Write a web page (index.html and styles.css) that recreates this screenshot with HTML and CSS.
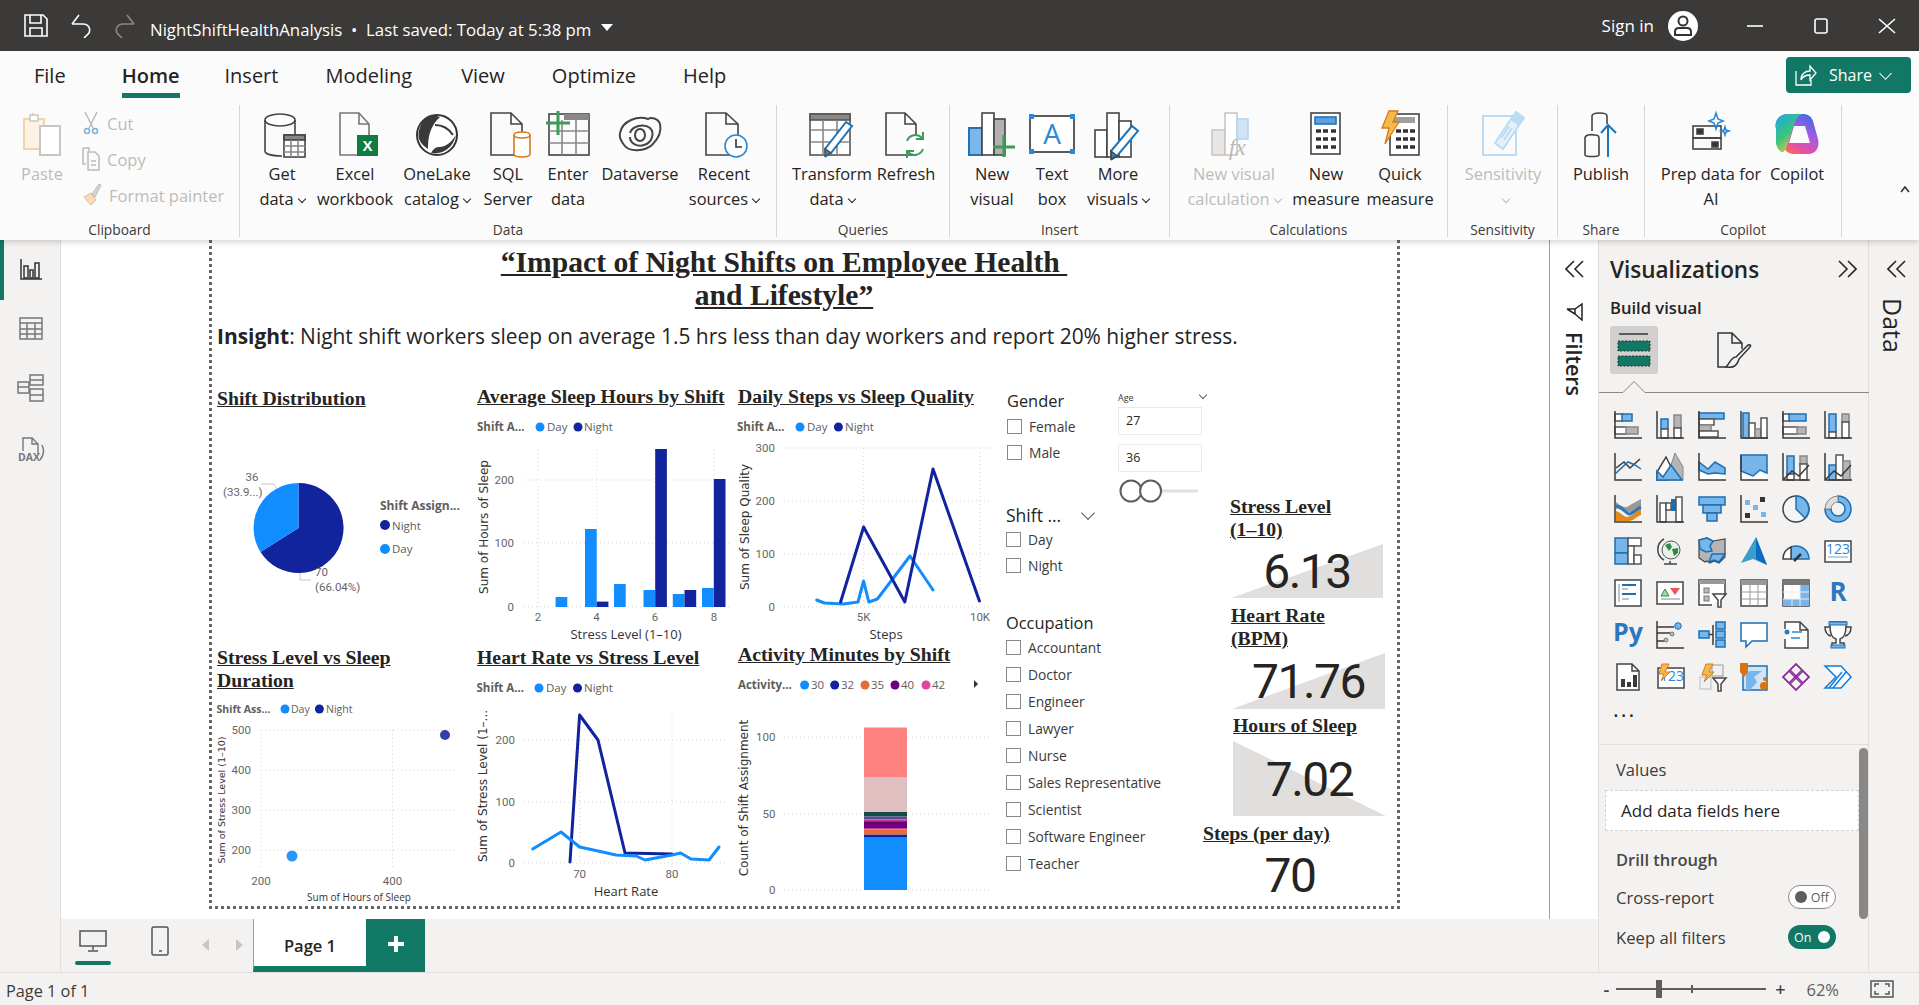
FILE: index.html
```html
<!DOCTYPE html>
<html lang="en">
<head>
<meta charset="utf-8">
<title>NightShiftHealthAnalysis - Power BI Desktop</title>
<link rel="stylesheet" href="styles.css">
</head>
<body>
<header class="titlebar">
  <div class="qat">
    <svg width="24" height="23" viewBox="0 0 24 23" class="wi"><path d="M1 1h18l4 4v17H1zM6 1v8h11V1M6 22v-8h12v8"/></svg>
    <svg width="22" height="24" viewBox="0 0 22 24" class="wi"><path d="M2 10h11c5 0 8 4 6 9l-5 5M2 10l7-9M2 10l5 0"/></svg>
    <svg width="22" height="24" viewBox="0 0 22 24" class="di"><path d="M20 10H9c-5 0-8 4-6 9l5 5M20 10l-7-9M20 10h-5"/></svg>
  </div>
  <div class="doc">NightShiftHealthAnalysis &nbsp;•&nbsp; Last saved: Today at 5:38 pm</div>
  <span class="doc-caret"></span>
  <div class="spacer"></div>
  <div class="signin">Sign in</div>
  <svg class="avatar" width="30" height="30" viewBox="0 0 30 30"><circle cx="15" cy="15" r="15" fill="#fff"/><circle cx="15" cy="10" r="4.5" fill="none" stroke="#333" stroke-width="2"/><path d="M7 24v-3c0-3 2-4 4-4h8c2 0 4 1 4 4v3z" fill="none" stroke="#333" stroke-width="2"/></svg>
  <div class="winbtns">
    <svg width="18" height="16" viewBox="0 0 18 16" class="wi"><path d="M1 8h16"/></svg>
    <svg width="14" height="16" viewBox="0 0 14 16" class="wi"><rect x="1" y="1" width="12" height="14" rx="2"/></svg>
    <svg width="18" height="16" viewBox="0 0 18 16" class="wi"><path d="M1 1l16 14M17 1L1 15"/></svg>
  </div>
</header>

<section class="ribbon">
  <nav class="tabs">
    <span class="tab t-file">File</span>
    <span class="tab active">Home</span>
    <span class="tab">Insert</span>
    <span class="tab t-model">Modeling</span>
    <span class="tab">View</span>
    <span class="tab">Optimize</span>
    <span class="tab">Help</span>
    <div class="share">
      <svg width="22" height="24" viewBox="0 0 22 24" class="wi thin"><path d="M1 8v14h15v-5M6 17c0-6 4-9 9-9V3l6 7-6 7v-5c-4 0-7 1-9 5z"/></svg>
      <span>Share</span><i class="chev-w"></i>
    </div>
  </nav>
  <div class="groups">
    <div class="group g-clip">
      <div class="items">
        <div class="item dis w-paste">
          <svg class="ic" width="48" height="48" viewBox="0 0 48 48"><path d="M6 8h6l3-5 3 5h8v30H6z" fill="#fdf3e5" stroke="#f2d3aa" stroke-width="2"/><rect x="22" y="15" width="20" height="29" fill="#fff" stroke="#c8c6c4" stroke-width="2"/><path d="M12 4h8v6h-8z" fill="#fff" stroke="#c8c6c4" stroke-width="1.5"/></svg>
          <div class="lbl">Paste</div>
        </div>
        <div class="minis dis">
          <div class="mini"><svg width="18" height="24" viewBox="0 0 18 24" fill="none" stroke="#bdbbb9" stroke-width="1.5"><path d="M3 1l8 16M15 1L7 17"/><circle cx="5" cy="20" r="2.5" stroke="#7fb1d8"/><circle cx="13" cy="20" r="2.5" stroke="#7fb1d8"/></svg><span>Cut</span></div>
          <div class="mini"><svg width="18" height="24" viewBox="0 0 18 24" fill="none" stroke="#bdbbb9" stroke-width="1.5"><path d="M1 1h6v3M1 1v16h3M6 5h7l4 4v14H6zM9 14h5M9 18h5"/></svg><span>Copy</span></div>
          <div class="mini"><svg width="20" height="24" viewBox="0 0 20 24"><path d="M2 14l7-4 5 7-5 5z" fill="#f8ddb6" stroke="#e2b98a"/><path d="M10 11l7-10 2 1-6 12z" fill="#d8d6d4" stroke="#bdbbb9"/></svg><span>Format painter</span></div>
        </div>
      </div>
      <div class="glabel">Clipboard</div>
    </div>

    <div class="group g-data">
      <div class="items">
        <div class="item w60"><svg class="ic" width="48" height="48" viewBox="0 0 48 48" fill="none" stroke="#444" stroke-width="1.6"><ellipse cx="22" cy="9" rx="15" ry="6" fill="#fff"/><path d="M7 9v31c0 3 7 5 17 5M37 9v14"/><rect x="26" y="24" width="21" height="22" fill="#fff"/><rect x="26" y="24" width="21" height="5" fill="#8a8886"/><path d="M33 29v17M40 29v17M26 35h21M26 41h21" stroke="#8a8886"/></svg><div class="lbl">Get<br>data<i class="chev"></i></div></div>
        <div class="item w86"><svg class="ic" width="48" height="48" viewBox="0 0 48 48" fill="none" stroke="#777" stroke-width="1.6"><path d="M9 2h19l10 11v31H9zM28 2v11h10"/><rect x="26" y="24" width="21" height="21" fill="#107c41" stroke="none"/><text x="36.5" y="40" class="xl">X</text></svg><div class="lbl">Excel<br>workbook</div></div>
        <div class="item w78"><svg class="ic" width="48" height="48" viewBox="0 0 48 48"><ellipse cx="24" cy="24" rx="20" ry="20" fill="#fff" stroke="#333" stroke-width="2"/><path d="M20 4C10 6 4 18 6 28c2 5 6 8 9 10 0-10 1-22 12-32z" fill="#3b3a39"/><path d="M18 42c10 2 22-4 25-18-4 6-9 12-17 12-4 0-6 3-8 6z" fill="#3b3a39"/><path d="M22 14c8 0 14 4 18 10" fill="none" stroke="#3b3a39" stroke-width="2"/></svg><div class="lbl">OneLake<br>catalog<i class="chev"></i></div></div>
        <div class="item w64"><svg class="ic" width="48" height="48" viewBox="0 0 48 48" fill="none" stroke="#444" stroke-width="1.6"><path d="M7 2h20l11 11v31H7zM27 2v11h11"/><path d="M30 24c0-4 16-4 16 0v19c0 4-16 4-16 0z" fill="#fff" stroke="#d87a1c"/><path d="M30 24c0 4 16 4 16 0" stroke="#d87a1c"/></svg><div class="lbl">SQL<br>Server</div></div>
        <div class="item w56"><svg class="ic" width="48" height="48" viewBox="0 0 48 48" fill="none" stroke="#444" stroke-width="1.6"><rect x="5" y="3" width="40" height="41"/><rect x="20" y="3" width="25" height="6" fill="#8a8886" stroke="none"/><path d="M5 20h40M5 32h40M18 9v35M32 9v35" stroke="#8a8886"/><path d="M14 0v24M2 12h24" stroke="#3d9a5c" stroke-width="3"/></svg><div class="lbl">Enter<br>data</div></div>
        <div class="item w88"><svg class="ic" width="48" height="48" viewBox="0 0 48 48" fill="none" stroke="#444" stroke-width="2"><path d="M4 22C6 10 22 4 32 8c3-2 10-1 12 5 2 8-2 15-8 21-7 6-22 8-28 0-3-4-5-8-4-12z"/><path d="M14 22c2-7 14-10 20-5 5 5 2 15-6 17-6 2-14-1-14-8"/><ellipse cx="24" cy="24" rx="5" ry="6"/></svg><div class="lbl">Dataverse</div></div>
        <div class="item w80"><svg class="ic" width="48" height="48" viewBox="0 0 48 48" fill="none" stroke="#444" stroke-width="1.6"><path d="M6 2h20l12 11v31H6zM26 2v11h12"/><circle cx="36" cy="35" r="11" fill="#fff" stroke="#2b88d8"/><path d="M36 28v8h6" stroke="#333"/></svg><div class="lbl">Recent<br>sources<i class="chev"></i></div></div>
      </div>
      <div class="glabel">Data</div>
    </div>

    <div class="group g-query">
      <div class="items">
        <div class="item w80"><svg class="ic" width="48" height="48" viewBox="0 0 48 48" fill="none" stroke="#555" stroke-width="1.6"><rect x="2" y="3" width="40" height="41" fill="#fff"/><rect x="2" y="3" width="40" height="6" fill="#8a8886"/><path d="M2 19h40M2 31h40M15 9v35M29 9v35" stroke="#8a8886"/><path d="M18 45l-1-7 21-27 6 4-21 27z" fill="#fff" stroke="#1f74b7" stroke-width="2"/><path d="M17 38l6 4-6 3z" fill="#2b88d8"/></svg><div class="lbl">Transform<br>data<i class="chev"></i></div></div>
        <div class="item w68"><svg class="ic" width="48" height="48" viewBox="0 0 48 48" fill="none" stroke="#444" stroke-width="1.6"><path d="M4 2h19l11 11v31H4zM23 2v11h11"/><circle cx="33" cy="34" r="10" fill="#fff" stroke="none"/><path d="M25 30a9 9 0 0 1 15-3M41 38a9 9 0 0 1-15 3" stroke="#3d9a5c" stroke-width="2"/><path d="M41 21v7h-7M25 47v-7h7" stroke="#3d9a5c" stroke-width="2"/></svg><div class="lbl">Refresh</div></div>
      </div>
      <div class="glabel">Queries</div>
    </div>

    <div class="group g-insert">
      <div class="items">
        <div class="item w60"><svg class="ic" width="48" height="48" viewBox="0 0 48 48" fill="none" stroke="#444" stroke-width="1.6"><rect x="1" y="17" width="13" height="27" fill="#7db7ea" stroke="#1f74b7" stroke-width="2"/><rect x="14" y="2" width="12" height="42" fill="#fff"/><rect x="26" y="8" width="11" height="36" fill="#b3b0ad"/><path d="M36 24v22M25 36h22" stroke="#3d9a5c" stroke-width="3"/></svg><div class="lbl">New<br>visual</div></div>
        <div class="item w60"><svg class="ic" width="48" height="48" viewBox="0 0 48 48" fill="none"><rect x="2" y="5" width="44" height="36" fill="#fff" stroke="#333" stroke-width="1.6"/><path d="M1 3h5v5H1zM42 3h5v5h-5zM1 38h5v5H1zM42 38h5v5h-5z" fill="#2b88d8"/><text x="24" y="33" class="tb">A</text></svg><div class="lbl">Text<br>box</div></div>
        <div class="item w72"><svg class="ic" width="48" height="48" viewBox="0 0 48 48" fill="none" stroke="#444" stroke-width="1.6"><rect x="1" y="19" width="12" height="27" fill="#fff"/><rect x="13" y="2" width="12" height="44" fill="#fff"/><rect x="25" y="10" width="12" height="36" fill="#fff"/><path d="M18 48l-1-8 21-25 6 5-21 25z" fill="#fff" stroke="#1f74b7" stroke-width="2"/><path d="M17 40l6 5-6 3z" fill="#2b88d8"/></svg><div class="lbl">More<br>visuals<i class="chev"></i></div></div>
      </div>
      <div class="glabel">Insert</div>
    </div>

    <div class="group g-calc">
      <div class="items">
        <div class="item dis w100"><svg class="ic" width="48" height="48" viewBox="0 0 48 48" fill="none" stroke="#c8c6c4" stroke-width="1.6"><rect x="2" y="19" width="13" height="25" fill="#e8e6e4"/><rect x="15" y="2" width="12" height="42" fill="#fff"/><rect x="27" y="8" width="11" height="20" fill="#cfe3f5" stroke="#b8d5ee"/><text x="36" y="44" class="fx">fx</text></svg><div class="lbl">New visual<br>calculation<i class="chev"></i></div></div>
        <div class="item w84"><svg class="ic" width="48" height="48" viewBox="0 0 48 48" fill="none" stroke="#444" stroke-width="1.6"><rect x="9" y="2" width="29" height="41" fill="#fff"/><rect x="13" y="6" width="21" height="7" fill="#5aa3e0" stroke="#1f74b7"/><path d="M14 20h5M21 20h5M29 20h5M14 28h5M21 28h5M29 28h5M14 36h5M21 36h5M29 36h5" stroke="#333" stroke-width="3.5"/></svg><div class="lbl">New<br>measure</div></div>
        <div class="item w64"><svg class="ic" width="48" height="48" viewBox="0 0 48 48" fill="none" stroke="#444" stroke-width="1.6"><rect x="14" y="3" width="29" height="41" fill="#fff"/><rect x="18" y="6" width="21" height="6" fill="#a19f9d" stroke="none"/><path d="M20 20h5M27 20h5M34 20h5M20 28h5M27 28h5M34 28h5M20 36h5M27 36h5M34 36h5" stroke="#333" stroke-width="3.5"/><path d="M13 0h9l-5 11h6L9 33l4-16H6z" fill="#f7b84b" stroke="#d87a1c" stroke-width="1.3"/></svg><div class="lbl">Quick<br>measure</div></div>
      </div>
      <div class="glabel">Calculations</div>
    </div>

    <div class="group g-sens">
      <div class="items">
        <div class="item dis w110"><svg class="ic" width="48" height="48" viewBox="0 0 48 48" fill="none" stroke="#bcdcf4" stroke-width="2"><rect x="4" y="5" width="33" height="39"/><path d="M16 32L32 8l8 6-16 24z" fill="#e5f1fb"/><path d="M32 8l5-7 8 6-5 7" fill="#bcdcf4"/><path d="M22 27l8-12M25 29l8-12"/></svg><div class="lbl">Sensitivity<br><i class="chev"></i></div></div>
      </div>
      <div class="glabel">Sensitivity</div>
    </div>

    <div class="group g-share">
      <div class="items">
        <div class="item w86"><svg class="ic" width="48" height="48" viewBox="0 0 48 48" fill="none" stroke="#444" stroke-width="1.6"><path d="M15 20V5c0-4 15-4 15 0v8"/><path d="M8 44V27c0-3 5-4 10-3 3 0 4 1 4 3v17c0 2-14 2-14 0z"/><path d="M31 46V15M24 22l7-8 8 8" stroke="#1f74b7" stroke-width="2"/></svg><div class="lbl">Publish</div></div>
      </div>
      <div class="glabel">Share</div>
    </div>

    <div class="group g-cop">
      <div class="items">
        <div class="item w100"><svg class="ic" width="48" height="48" viewBox="0 0 48 48" fill="none" stroke="#444" stroke-width="1.6"><rect x="6" y="15" width="28" height="12"/><rect x="6" y="27" width="28" height="11"/><rect x="10" y="18" width="6" height="5" fill="#333"/><rect x="25" y="31" width="6" height="5" fill="#333"/><path d="M29 2l2 6 5 2-5 2-2 6-2-6-5-2 5-2z" stroke="#2b88d8"/><path d="M38 16l1 3 3 1-3 1-1 3-1-3-3-1 3-1z" stroke="#2b88d8"/></svg><div class="lbl">Prep data for<br>AI</div></div>
        <div class="item w72"><svg class="ic" width="48" height="48" viewBox="0 0 48 48"><defs><linearGradient id="cpa" x1="0" y1="0" x2=".6" y2="1"><stop offset="0" stop-color="#1fa8e8"/><stop offset=".55" stop-color="#37c47e"/><stop offset="1" stop-color="#f4c343"/></linearGradient><linearGradient id="cpb" x1=".8" y1="0" x2=".2" y2="1"><stop offset="0" stop-color="#3d6be8"/><stop offset=".4" stop-color="#a35be2"/><stop offset=".75" stop-color="#e84fa0"/><stop offset="1" stop-color="#f5803a"/></linearGradient></defs><path d="M15 3h15c5 0 8 2 10 7l5 18c2 8-2 15-9 15H21c-5 0-8-2-10-7L3 18C1 10 6 3 15 3z" fill="url(#cpb)"/><path d="M15 3h15c-5 1-7 5-9 10l-7 22c-1 4-4 8-7 5-2-2-3-4-4-7L3 18C1 10 6 3 15 3z" fill="url(#cpa)"/><path d="M21 15h11l5 17H16z" fill="#fbfbfb"/></svg><div class="lbl">Copilot</div></div>
      </div>
      <div class="glabel">Copilot</div>
    </div>
    <svg class="collapse" width="10" height="7" viewBox="0 0 10 7"><path d="M1 6l4-5 4 5" fill="none" stroke="#333" stroke-width="1.6"/></svg>
  </div>
</section>

<main class="workspace">
  <aside class="leftnav">
    <div class="navitem active">
      <svg width="22" height="22" viewBox="0 0 22 22" fill="none" stroke="#333" stroke-width="1.5"><path d="M1 0v20h21"/><path d="M4 7h4v12H4zM10 11h3v8h-3zM15 4h4v15h-4z"/></svg>
    </div>
    <div class="navitem">
      <svg width="24" height="23" viewBox="0 0 24 23" fill="none" stroke="#777" stroke-width="1.5"><rect x="1" y="1" width="22" height="21"/><path d="M1 6h22M1 12h22M1 17h22M8 6v16M16 6v16"/></svg>
    </div>
    <div class="navitem">
      <svg width="28" height="28" viewBox="0 0 28 28" fill="none" stroke="#777" stroke-width="1.5"><rect x="1" y="8" width="11" height="11"/><path d="M1 13h11"/><rect x="13" y="1" width="13" height="10"/><path d="M13 6h13"/><rect x="13" y="15" width="13" height="12"/><path d="M13 21h13"/></svg>
    </div>
    <div class="navitem">
      <svg width="28" height="27" viewBox="0 0 28 27" fill="none" stroke="#777" stroke-width="1.4"><path d="M6 14V1h9l6 6v10M15 1v6h6M25 8c2 4 2 10-2 15"/><text x="1" y="24" class="daxt">DAX</text></svg>
    </div>
  </aside>

  <div class="center">
    <div class="canvas-row">
      <div class="canvas">
        <div class="report">
          <div class="rtitle">“Impact of Night Shifts on Employee Health&nbsp;<br>and Lifestyle”</div>
          <p class="insight"><b>Insight</b>: Night shift workers sleep on average 1.5 hrs less than day workers and report 20% higher stress.</p>

          <div class="vis v-pie">
            <h3 class="vt">Shift Distribution</h3>
            <svg class="chart" width="260" height="190" viewBox="215 410 260 190">
              <path d="M298.5 528V483A45 45 0 1 1 260.5 552Z" fill="#12239e"/>
              <path d="M298.5 528L260.5 552A45 45 0 0 1 298.5 483Z" fill="#118dff"/>
              <path class="leader" d="M261 484h13l3 5M300 573v7h11"/>
              <text class="tk" x="252" y="481" text-anchor="middle">36</text>
              <text class="tk" x="223" y="496">(33.9...)</text>
              <text class="tk" x="315" y="576">70</text>
              <text class="tk" x="315" y="591">(66.04%)</text>
              <text class="lg big" x="380" y="510">Shift Assign...</text>
              <circle cx="385" cy="525" r="5" fill="#12239e"/><text class="ll" x="392" y="530">Night</text>
              <circle cx="385" cy="549" r="5" fill="#118dff"/><text class="ll" x="392" y="553">Day</text>
            </svg>
          </div>

          <div class="vis v-bars">
            <h3 class="vt">Average Sleep Hours by Shift</h3>
            <svg class="chart" width="270" height="240" viewBox="470 408 270 240">
              <text class="lg" x="477" y="431">Shift A...</text>
              <circle cx="540" cy="427" r="4.5" fill="#118dff"/><text class="ll" x="547" y="431">Day</text>
              <circle cx="578" cy="427" r="4.5" fill="#12239e"/><text class="ll" x="584" y="431">Night</text>
              <path class="grid" d="M524 480H729M524 543H729M524 607H729M538 450V607M596.6 450V607M655 450V607M714 450V607"/>
              <text class="tk" x="514" y="484" text-anchor="end">200</text>
              <text class="tk" x="514" y="547" text-anchor="end">100</text>
              <text class="tk" x="514" y="611" text-anchor="end">0</text>
              <text class="ay" transform="translate(488 527) rotate(-90)" text-anchor="middle">Sum of Hours of Sleep</text>
              <g fill="#118dff"><rect x="555.6" y="597" width="11.7" height="10"/><rect x="585" y="529" width="11.7" height="78"/><rect x="614" y="584" width="11.7" height="23"/><rect x="643.5" y="590" width="11.7" height="17"/><rect x="672.8" y="594" width="11.7" height="13"/><rect x="702" y="588" width="11.7" height="19"/></g>
              <g fill="#12239e"><rect x="596.7" y="601.6" width="11.7" height="5.4"/><rect x="655.2" y="449" width="11.7" height="158"/><rect x="684.5" y="590" width="11.7" height="17"/><rect x="713.8" y="479" width="11.7" height="128"/></g>
              <g class="tk" text-anchor="middle"><text x="538" y="621">2</text><text x="596.6" y="621">4</text><text x="655" y="621">6</text><text x="714" y="621">8</text></g>
              <text class="at" x="626" y="639" text-anchor="middle">Stress Level (1–10)</text>
            </svg>
          </div>

          <div class="vis v-lines">
            <h3 class="vt">Daily Steps vs Sleep Quality</h3>
            <svg class="chart" width="268" height="240" viewBox="732 408 268 240">
              <text class="lg" x="737" y="431">Shift A...</text>
              <circle cx="800" cy="427" r="4.5" fill="#118dff"/><text class="ll" x="807" y="431">Day</text>
              <circle cx="838.4" cy="427" r="4.5" fill="#12239e"/><text class="ll" x="845" y="431">Night</text>
              <path class="grid" d="M784 448H989M784 501H989M784 554H989M784 607H989M863.6 448V607M980 448V607"/>
              <g class="tk" text-anchor="end"><text x="775" y="452">300</text><text x="775" y="505">200</text><text x="775" y="558">100</text><text x="775" y="611">0</text></g>
              <text class="ay" transform="translate(749 527) rotate(-90)" text-anchor="middle">Sum of Sleep Quality</text>
              <polyline class="ln day" points="816.7,600 824.5,603 843.6,604 858,602 863.6,581 868.8,602 877.4,599 910,556 933,590"/>
              <polyline class="ln night" points="840.6,602 863.6,527 904.8,602 933,469 979.4,601"/>
              <text class="tk" x="863.6" y="621" text-anchor="middle">5K</text>
              <text class="tk" x="980" y="621" text-anchor="middle">10K</text>
              <text class="at" x="886" y="639" text-anchor="middle">Steps</text>
            </svg>
          </div>

          <div class="slicer s-gender">
            <div class="shead">Gender</div>
            <label class="srow"><i class="box"></i>Female</label>
            <label class="srow"><i class="box"></i>Male</label>
          </div>

          <div class="age">
            <div class="agehead"><span>Age</span><i class="chev-g"></i></div>
            <div class="agebox">27</div>
            <div class="agebox gap">36</div>
            <svg class="ageslide" width="90" height="24" viewBox="0 0 90 24"><path d="M30 12h50" stroke="#e1dfdd" stroke-width="3"/><circle cx="13" cy="12" r="10.5" fill="#fff" stroke="#605e5c" stroke-width="2"/><circle cx="32.6" cy="12" r="10.5" fill="#fff" stroke="#605e5c" stroke-width="2"/></svg>
          </div>

          <div class="slicer s-shift">
            <div class="shead big">Shift ...<i class="chev-g lg-chev"></i></div>
            <label class="srow"><i class="box"></i>Day</label>
            <label class="srow"><i class="box"></i>Night</label>
          </div>

          <div class="slicer s-occ">
            <div class="shead">Occupation</div>
            <label class="srow tight"><i class="box"></i>Accountant</label>
            <label class="srow tight"><i class="box"></i>Doctor</label>
            <label class="srow tight"><i class="box"></i>Engineer</label>
            <label class="srow tight"><i class="box"></i>Lawyer</label>
            <label class="srow tight"><i class="box"></i>Nurse</label>
            <label class="srow tight"><i class="box"></i>Sales Representative</label>
            <label class="srow tight"><i class="box"></i>Scientist</label>
            <label class="srow tight"><i class="box"></i>Software Engineer</label>
            <label class="srow tight"><i class="box"></i>Teacher</label>
          </div>

          <div class="kpi k1">
            <h3 class="vt">Stress Level<br>(1–10)</h3>
            <div class="kcard tri-up"><span>6.13</span></div>
          </div>
          <div class="kpi k2">
            <h3 class="vt">Heart Rate<br>(BPM)</h3>
            <div class="kcard tri-up"><span>71.76</span></div>
          </div>
          <div class="kpi k3">
            <h3 class="vt">Hours of Sleep</h3>
            <div class="kcard tri-down"><span>7.02</span></div>
          </div>
          <div class="kpi k4">
            <h3 class="vt">Steps (per day)</h3>
            <div class="kcard plain"><span>70</span></div>
          </div>

          <div class="vis v-scatter">
            <h3 class="vt">Stress Level vs Sleep<br>Duration</h3>
            <svg class="chart" width="255" height="213" viewBox="212 693 255 213">
              <text class="lg s" x="216.5" y="713">Shift Ass...</text>
              <circle cx="285" cy="709" r="4.5" fill="#118dff"/><text class="ll s" x="291" y="713">Day</text>
              <circle cx="319.4" cy="709" r="4.5" fill="#12239e"/><text class="ll s" x="326" y="713">Night</text>
              <path class="grid" d="M261 730H455M261 770H455M261 810H455M261 850H455M261 730V870M392.5 730V870"/>
              <g class="tk" text-anchor="end"><text x="251" y="734">500</text><text x="251" y="774">400</text><text x="251" y="814">300</text><text x="251" y="854">200</text></g>
              <text class="ay small" transform="translate(225 800) rotate(-90)" text-anchor="middle">Sum of Stress Level (1–10)</text>
              <circle cx="292" cy="856" r="5.5" fill="#2b96ff"/>
              <circle cx="445" cy="735" r="5" fill="#3040aa"/>
              <text class="tk" x="261" y="885" text-anchor="middle">200</text>
              <text class="tk" x="392.5" y="885" text-anchor="middle">400</text>
              <text class="at s" x="359" y="901" text-anchor="middle">Sum of Hours of Sleep</text>
            </svg>
          </div>

          <div class="vis v-heart">
            <h3 class="vt">Heart Rate vs Stress Level</h3>
            <svg class="chart" width="265" height="235" viewBox="470 670 265 235">
              <text class="lg" x="476.5" y="692">Shift A...</text>
              <circle cx="539" cy="688" r="4.5" fill="#118dff"/><text class="ll" x="546" y="692">Day</text>
              <circle cx="577.5" cy="688" r="4.5" fill="#12239e"/><text class="ll" x="584" y="692">Night</text>
              <path class="grid" d="M524 740H728M524 802H728M524 863H728M579.6 712V863M672 712V863"/>
              <g class="tk" text-anchor="end"><text x="515" y="744">200</text><text x="515" y="806">100</text><text x="515" y="867">0</text></g>
              <text class="ay" transform="translate(487 786) rotate(-90)" text-anchor="middle">Sum of Stress Level (1–...</text>
              <polyline class="ln night" points="570,862 579.6,715 598,740 625,853 672,854"/>
              <polyline class="ln day" points="532.7,849 561,832 579.6,847 598,851 616,855 636,856 645,860 672,855 680.6,853 691,859 709,860 719,847"/>
              <text class="tk" x="579.6" y="878" text-anchor="middle">70</text>
              <text class="tk" x="672" y="878" text-anchor="middle">80</text>
              <text class="at" x="626" y="896" text-anchor="middle">Heart Rate</text>
            </svg>
          </div>

          <div class="vis v-stack">
            <h3 class="vt">Activity Minutes by Shift</h3>
            <svg class="chart" width="265" height="235" viewBox="732 667 265 235">
              <text class="lg" x="738" y="689">Activity...</text>
              <circle cx="804.6" cy="685" r="4.5" fill="#118dff"/><text class="ll" x="811" y="689">30</text>
              <circle cx="834.7" cy="685" r="4.5" fill="#12239e"/><text class="ll" x="841" y="689">32</text>
              <circle cx="865" cy="685" r="4.5" fill="#e66c37"/><text class="ll" x="871" y="689">35</text>
              <circle cx="895" cy="685" r="4.5" fill="#6b007b"/><text class="ll" x="901" y="689">40</text>
              <circle cx="926" cy="685" r="4.5" fill="#e044a7"/><text class="ll" x="932" y="689">42</text>
              <path d="M974 680l4 4-4 4z" fill="#333"/>
              <path class="grid" d="M784 737H990M784 814H990M784 890H990"/>
              <g class="tk" text-anchor="end"><text x="775.5" y="741">100</text><text x="775.5" y="818">50</text><text x="775.5" y="894">0</text></g>
              <text class="ay" transform="translate(748 798) rotate(-90)" text-anchor="middle">Count of Shift Assignment</text>
              <rect x="864" y="727" width="43" height="1" fill="#f0c8c4"/>
              <rect x="864" y="728" width="43" height="49.7" fill="#fd817e"/>
              <rect x="864" y="777.7" width="43" height="34.3" fill="#dfbfbf"/>
              <rect x="864" y="812" width="43" height="4.3" fill="#144b45"/>
              <rect x="864" y="816.3" width="43" height="3" fill="#54508a"/>
              <rect x="864" y="819.3" width="43" height="1.9" fill="#c83d9c"/>
              <rect x="864" y="821.2" width="43" height="6.8" fill="#6b007b"/>
              <rect x="864" y="828" width="43" height="1.3" fill="#c83d9c"/>
              <rect x="864" y="829.3" width="43" height="5.4" fill="#e66c37"/>
              <rect x="864" y="834.7" width="43" height="3" fill="#12239e"/>
              <rect x="864" y="837.7" width="43" height="52.3" fill="#118dff"/>
            </svg>
          </div>
        </div>
      </div>
      <aside class="filters">
        <svg width="19" height="18" viewBox="0 0 19 18" class="dbl"><path d="M9 1L1 9l8 8M18 1l-8 8 8 8"/></svg>
        <svg class="funnel" width="17" height="18" viewBox="0 0 17 18" fill="none" stroke="#252423" stroke-width="1.5"><path d="M1 6h8l7-5v16l-7-6V6M1 6l8 5"/></svg>
        <div class="vtext">Filters</div>
      </aside>
    </div>
    <div class="pagestrip">
      <div class="devices">
        <div class="device on"><svg width="28" height="22" viewBox="0 0 28 22" fill="none" stroke="#555" stroke-width="1.5"><rect x="1" y="1" width="26" height="15"/><path d="M14 16v4M9 21h10"/></svg></div>
        <div class="device phone"><svg width="18" height="30" viewBox="0 0 18 30" fill="none" stroke="#555" stroke-width="1.5"><rect x="1" y="1" width="16" height="28" rx="1.5"/><path d="M8 25h3"/></svg></div>
      </div>
      <div class="pagenav"><i class="tri-l"></i><i class="tri-r"></i></div>
      <div class="pagetab">Page 1</div>
      <div class="pageadd"><svg width="18" height="18" viewBox="0 0 18 18"><path d="M9 1v16M1 9h16" stroke="#fff" stroke-width="4"/></svg></div>
    </div>
  </div>

  <aside class="vizpane">
    <div class="vizhead"><h2>Visualizations</h2><svg width="19" height="18" viewBox="0 0 19 18" class="dbl"><path d="M1 1l8 8-8 8M10 1l8 8-8 8"/></svg></div>
    <div class="vizsub">Build visual</div>
    <div class="viztiles">
      <div class="tile sel"><svg width="36" height="36" viewBox="0 0 36 36"><path d="M3 2h29" stroke="#333" stroke-width="1.5"/><g fill="#117865" stroke="#333" stroke-dasharray="2 1.5"><rect x="2" y="9" width="32" height="10"/><rect x="2" y="24" width="32" height="10"/></g></svg></div>
      <div class="tile fmt"><svg width="38" height="38" viewBox="0 0 38 38" fill="none" stroke="#333" stroke-width="1.5"><path d="M10 36H2V2h14l10 10v6M16 2v10h10"/><path d="M10 36c5 1 11 0 13-8l11-12c2-2-1-3-3-1L20 26c-5 0-6 6-10 10z"/></svg></div>
    </div>
    <svg class="notch" width="270" height="14" viewBox="0 0 270 14"><path d="M0 12.5h24l11-11 11 11h224" fill="none" stroke="#8a8886"/></svg>

    <div class="vizgrid">
      <svg class="vi" viewBox="0 0 28 28"><rect class="wh" x="1" y="3" width="8" height="7"/><rect class="bl" x="8" y="3" width="10" height="7"/><rect class="wh" x="1" y="16" width="12" height="7"/><rect class="gr" x="12" y="16" width="12" height="7"/><path class="ax" d="M1 0v27h27"/></svg>
      <svg class="vi" viewBox="0 0 28 28"><rect class="bl" x="5" y="8" width="7" height="10"/><rect class="wh" x="5" y="18" width="7" height="9"/><rect class="gr" x="18" y="4" width="7" height="13"/><rect class="wh" x="18" y="17" width="7" height="10"/><path class="ax" d="M1 0v27h27"/></svg>
      <svg class="vi" viewBox="0 0 28 28"><rect class="bl" x="1" y="2" width="25" height="6"/><rect class="wh" x="1" y="8" width="15" height="6"/><rect class="gr" x="1" y="14" width="12" height="6"/><rect class="wh" x="1" y="20" width="19" height="6"/><path class="ax" d="M1 0v27h27"/></svg>
      <svg class="vi" viewBox="0 0 28 28"><rect class="bl" x="3" y="2" width="6" height="25"/><rect class="wh" x="9" y="12" width="6" height="15"/><rect class="gr" x="15" y="18" width="6" height="9"/><rect class="wh" x="21" y="7" width="6" height="20"/><path class="ax" d="M1 0v27h27"/></svg>
      <svg class="vi" viewBox="0 0 28 28"><rect class="wh" x="1" y="3" width="7" height="7"/><rect class="bl" x="7" y="3" width="17" height="7"/><rect class="wh" x="1" y="16" width="15" height="7"/><rect class="gr" x="15" y="16" width="9" height="7"/><path class="ax" d="M1 0v27h27"/></svg>
      <svg class="vi" viewBox="0 0 28 28"><rect class="bl" x="5" y="3" width="7" height="18"/><rect class="wh" x="5" y="21" width="7" height="6"/><rect class="gr" x="18" y="3" width="7" height="8"/><rect class="wh" x="18" y="11" width="7" height="16"/><path class="ax" d="M1 0v27h27"/></svg>

      <svg class="vi" viewBox="0 0 28 28"><path class="ax" d="M1 0v27h27"/><path class="ax" d="M2 15l8-6 6 6 10-9"/><path class="bt" d="M1 21l13-12 7 3 6 4"/></svg>
      <svg class="vi" viewBox="0 0 28 28"><path d="M10 27L19 0l8 14v13z" fill="#b5b5b5" stroke="#888"/><path d="M1 27v-8L10 4l8 16-6 7z" fill="#fff" stroke="#444" stroke-width="1.5"/><path class="bl" d="M1 18l6 6 8-12 11 15H1z"/></svg>
      <svg class="vi" viewBox="0 0 28 28"><path d="M1 21l9-7 7 6 10-5v12H1z" fill="#fff"/><path class="bl" d="M1 9l9 7 7-7 10 6v6l-10-1-7 1-9-4z"/><path class="ax" d="M1 0v27h27"/></svg>
      <svg class="vi" viewBox="0 0 28 28"><path class="bl" d="M1 2h26v18l-7-3-7 6-12-5z"/><path d="M1 20l12 5 7-6 7 3v5H1z" fill="#fff"/><path class="ax" d="M1 2v25h27"/></svg>
      <svg class="vi" viewBox="0 0 28 28"><rect class="bl" x="5" y="3" width="7" height="18"/><rect class="wh" x="5" y="21" width="7" height="6"/><rect class="gr" x="18" y="3" width="7" height="8"/><rect class="wh" x="18" y="11" width="7" height="16"/><path class="ax" d="M1 0v27h27M2 26l8-8 7 5 10-11"/></svg>
      <svg class="vi" viewBox="0 0 28 28"><rect class="bl" x="5" y="12" width="7" height="15"/><rect class="wh" x="12" y="2" width="7" height="25"/><rect class="gr" x="19" y="8" width="7" height="19"/><path class="ax" d="M1 0v27h27M2 26l8-8 7 5 10-11"/></svg>

      <svg class="vi" viewBox="0 0 28 28"><path d="M2 7c6 5 10 7 14 3l11-6v8c-5 4-7 6-12 5-6 0-9-4-13-3z" fill="#999"/><path d="M2 16c6 2 9 8 14 5 5-2 6-5 11-8v7c-5 2-8 6-12 6H2z" fill="#e38a1d"/><path d="M2 11c8 1 10 9 14 8s6-5 11-7" fill="none" stroke="#2b78bf" stroke-width="3"/><path class="ax" d="M1 0v27h27"/></svg>
      <svg class="vi" viewBox="0 0 28 28"><rect class="wh" x="4" y="8" width="6" height="19"/><rect class="wh" x="10" y="8" width="5" height="7"/><rect x="15" y="4" width="5" height="12" fill="#1c6fb3"/><rect class="wh" x="20" y="2" width="6" height="25"/><path class="ax" d="M1 0v27h27"/></svg>
      <svg class="vi" viewBox="0 0 28 28"><rect class="bl" x="1" y="2" width="26" height="8"/><rect class="bl" x="5" y="10" width="18" height="8"/><rect class="bl" x="9" y="18" width="10" height="8"/></svg>
      <svg class="vi" viewBox="0 0 28 28"><path class="ax" d="M1 0v27h27"/><rect x="5" y="5" width="5" height="5" fill="#77b5ea"/><rect x="20" y="2" width="5" height="5" fill="#333"/><rect x="13" y="10" width="5" height="5" fill="#77b5ea"/><rect x="5" y="18" width="5" height="5" fill="#333"/><rect x="21" y="17" width="5" height="5" fill="#77b5ea"/></svg>
      <svg class="vi" viewBox="0 0 28 28"><circle cx="14" cy="14" r="13" fill="#f5f5f5" stroke="#444" stroke-width="1.5"/><path class="bl" d="M14 1a13 13 0 0 1 9 22l-9-9z"/></svg>
      <svg class="vi" viewBox="0 0 28 28"><path class="bl" d="M14 1a13 13 0 1 1-13 13h6a7 7 0 1 0 7-7z"/><path d="M14 1v6a7 7 0 0 0-7 7H1A13 13 0 0 1 14 1z" fill="#ddd" stroke="#888"/></svg>

      <svg class="vi" viewBox="0 0 28 28"><rect class="bl" x="1" y="1" width="13" height="15"/><rect class="bl" x="1" y="16" width="13" height="11"/><rect class="wh" x="14" y="1" width="13" height="8"/><rect class="wh" x="14" y="9" width="6" height="18"/><rect class="wh" x="20" y="18" width="7" height="9"/></svg>
      <svg class="vi" viewBox="0 0 28 28"><circle cx="15" cy="13" r="9" fill="#e8f2e8" stroke="#555"/><path d="M9 8l5-2 2 4-3 4zM16 12l6-1v5l-4 3z" fill="#2e8b47"/><path d="M8 2a12 12 0 0 0 0 21M14 24v3M8 27h13" fill="none" stroke="#444" stroke-width="1.5"/></svg>
      <svg class="vi" viewBox="0 0 28 28"><path d="M1 3l8-2 6 3 12-2v18l-6 6-5-2-4 2-3-2-2 1-6-4z" fill="#b5b5b5" stroke="#444" stroke-width="1.2"/><path class="bl" d="M1 3l8-2 6 3-3 5 2 5-6 1-6-3zM14 17h13l-6 8-5-2-5 2z"/></svg>
      <svg class="vi" viewBox="0 0 28 28"><path d="M16 0L1 26l12-4 14 6z" fill="#3a9fcc"/><path d="M16 0v22l11 6z" fill="#0b6cc2"/></svg>
      <svg class="vi" viewBox="0 0 28 28"><path class="bl" d="M9 22V10a13 13 0 0 1 18 12z"/><path d="M1 22a13 13 0 0 1 8-12v12z" fill="#fff" stroke="#444" stroke-width="1.5"/><path d="M12 24l7-7" stroke="#333" stroke-width="2.5"/></svg>
      <svg class="vi" viewBox="0 0 28 28"><rect x="1" y="4" width="26" height="21" fill="#fff" stroke="#444" stroke-width="1.5"/><text x="14" y="17" class="n123">123</text><path d="M4 20h20" stroke="#69a9dd"/></svg>

      <svg class="vi" viewBox="0 0 28 28"><rect x="1" y="1" width="26" height="26" fill="#fff" stroke="#444" stroke-width="1.5"/><path d="M5 5v18" stroke="#888"/><path d="M8 6h14M8 15h14" stroke="#1c6fb3" stroke-width="2"/><path d="M8 10h6M8 20h7" stroke="#888"/></svg>
      <svg class="vi" viewBox="0 0 28 28"><rect x="1" y="3" width="26" height="22" fill="#fff" stroke="#444" stroke-width="1.5"/><path d="M5 17l4-7 4 7z" fill="#a0d8a8" stroke="#2e8b47"/><path d="M14 9h10l-5 7z" fill="#e8555a"/><path d="M5 20h19" stroke="#888"/></svg>
      <svg class="vi" viewBox="0 0 28 28"><path d="M14 26H1V1h26v14" fill="#fff" stroke="#444" stroke-width="1.5"/><rect x="1" y="1" width="26" height="4" fill="#999"/><rect x="6" y="9" width="5" height="5" fill="#bbb" stroke="#777"/><rect x="6" y="17" width="5" height="5" fill="#bbb" stroke="#777"/><path d="M15 15h13l-5 6v7h-3v-7z" fill="#fff" stroke="#444" stroke-width="1.5"/></svg>
      <svg class="vi" viewBox="0 0 28 28"><rect x="1" y="1" width="26" height="26" fill="#fff" stroke="#444" stroke-width="1.5"/><rect x="1" y="1" width="26" height="5" fill="#999"/><path d="M10 6v21M18 6v21M1 13h26M1 20h26" stroke="#999"/></svg>
      <svg class="vi" viewBox="0 0 28 28"><rect x="1" y="1" width="26" height="26" fill="#fff" stroke="#444" stroke-width="1.5"/><rect x="1" y="1" width="26" height="5" fill="#777"/><rect x="18" y="6" width="9" height="21" fill="#77b5ea"/><rect x="1" y="20" width="26" height="7" fill="#77b5ea"/><path d="M10 6v21M18 6v21M1 13h26M1 20h26" stroke="#eee"/></svg>
      <svg class="vi" viewBox="0 0 28 28"><text x="14" y="22" class="rt">R</text></svg>

      <svg class="vi" viewBox="0 0 28 28"><text x="14" y="20" class="py">Py</text></svg>
      <svg class="vi" viewBox="0 0 28 28"><path class="ax" d="M1 0v27h27M1 6h17M1 12h13M1 20h8"/><circle cx="22" cy="5" r="3.3" fill="#77b5ea" stroke="#1c6fb3"/><circle cx="16" cy="13" r="2" fill="#bbb" stroke="#777"/><circle cx="10" cy="19" r="2" fill="#bbb" stroke="#777"/></svg>
      <svg class="vi" viewBox="0 0 28 28"><rect class="bl" x="1" y="10" width="10" height="7"/><path class="ax" d="M11 13.5h4M15 4v20"/><rect class="bl" x="18" y="1" width="9" height="7"/><rect class="bl" x="18" y="10" width="9" height="7"/><rect class="bl" x="18" y="19" width="9" height="7"/></svg>
      <svg class="vi" viewBox="0 0 28 28"><path d="M1 2h26v18H12l-6 6v-6H1z" fill="#fff" stroke="#1c6fb3" stroke-width="1.5"/></svg>
      <svg class="vi" viewBox="0 0 28 28"><path d="M3 8V1h15l8 8v18H3v-9M18 1v8h8" fill="#fff" stroke="#444" stroke-width="1.5"/><circle cx="5" cy="11" r="2.5" fill="#2b78bf"/><path d="M10 11h10M9 17h9" stroke="#2b88d8" stroke-width="1.3"/></svg>
      <svg class="vi" viewBox="0 0 28 28"><path d="M6 1h16v4c0 7-2 12-6 13v4h4v3H8v-3h4v-4C8 17 6 12 6 5z" fill="#fff" stroke="#444" stroke-width="1.5"/><rect x="5" y="1" width="18" height="3" fill="#77b5ea" stroke="#1c6fb3"/><rect x="7" y="24" width="14" height="3" fill="#77b5ea" stroke="#1c6fb3"/><path d="M6 6H1c0 5 2 8 6 9M22 6h5c0 5-2 8-6 9" fill="none" stroke="#444" stroke-width="1.5"/></svg>

      <svg class="vi" viewBox="0 0 28 28"><path d="M3 1h15l7 7v19H3zM18 1v7h7" fill="#fff" stroke="#444" stroke-width="1.5"/><path d="M7 16h4v8H7zM13 19h4v5h-4zM19 12h4v12h-4z" fill="#3b3a39"/></svg>
      <svg class="vi" viewBox="0 0 28 28"><rect x="2" y="5" width="26" height="20" fill="#fff" stroke="#444" stroke-width="1.5"/><text x="16" y="18" class="n123">123</text><path d="M6 1h7l-4 8h5L5 18l3-7H3z" fill="#f7b84b" stroke="#d87a1c"/></svg>
      <svg class="vi" viewBox="0 0 28 28"><rect x="2" y="14" width="11" height="12" fill="#f0f0f0" stroke="#bbb"/><rect x="14" y="2" width="11" height="11" fill="#f0f0f0" stroke="#999"/><path d="M8 1h7l-4 8h5L6 19l3-7H4z" fill="#f7b84b" stroke="#d87a1c"/><path d="M15 15h13l-5 6v7h-3v-7z" fill="#fff" stroke="#444" stroke-width="1.5"/></svg>
      <svg class="vi" viewBox="0 0 28 28"><path d="M3 3h24v24H3z" fill="#cfe3f5" stroke="#1c6fb3" stroke-width="1.5"/><path d="M10 8h12l-8 6 3 5-7 8H6V10z" fill="#77b5ea"/><path d="M0 0h8v9l-4 5-4-5z" fill="#d9730d"/><circle cx="25" cy="16" r="2" fill="#d9730d"/><circle cx="24" cy="23" r="4" fill="#d9730d"/></svg>
      <svg class="vi" viewBox="0 0 28 28"><g fill="none" stroke="#8c2fa0" stroke-width="1.5"><path d="M1 14L14 1l6 6-13 13z"/><path d="M14 27L1 14l6-6 13 13z"/><path d="M14 27L27 14l-6-6-13 13z"/><path d="M14 1l13 13-6 6L8 7z"/></g></svg>
      <svg class="vi" viewBox="0 0 28 28"><g fill="#fff" stroke="#0f7fdb" stroke-width="1.5"><path d="M1 3h16l10 11-10 11H1l11-11z"/><path d="M9 25L22 9M5 25l13-16" fill="none"/></g></svg>
    </div>
    <div class="more">···</div>

    <div class="wells">
      <div class="wlabel">Values</div>
      <div class="drop">Add data fields here</div>
      <div class="wlabel strong">Drill through</div>
      <div class="trow first"><span>Cross-report</span><div class="toggle off"><i></i><b>Off</b></div></div>
      <div class="trow"><span>Keep all filters</span><div class="toggle on"><b>On</b><i></i></div></div>
      <div class="scrollbar"></div>
    </div>
  </aside>

  <aside class="datapane">
    <svg width="19" height="18" viewBox="0 0 19 18" class="dbl"><path d="M9 1L1 9l8 8M18 1l-8 8 8 8"/></svg>
    <div class="vtext data">Data</div>
  </aside>
</main>

<footer class="status">
  <div class="pageno">Page 1 of 1</div>
  <div class="zoom">
    <span class="zm">-</span>
    <div class="slider"><i class="thumb"></i><i class="tick"></i></div>
    <span class="zp">+</span>
    <span class="pct">62%</span>
    <svg width="24" height="18" viewBox="0 0 24 18" fill="none" stroke="#555" stroke-width="1.5"><rect x="1" y="1" width="22" height="16"/><path d="M5 7V4h4M15 4h4v3M5 11v3h4M15 14h4v-3"/></svg>
  </div>
</footer>
</body>
</html>
```
FILE: styles.css
```css
* { box-sizing: border-box; }
html, body { margin: 0; padding: 0; }
body {
  width: 1919px; height: 1005px; overflow: hidden;
  display: flex; flex-direction: column;
  font-family: "Open Sans", "Noto Sans", sans-serif;
  color: #252423; background: #f3f2f1;
}
i { font-style: normal; }
h2, h3, p { margin: 0; }

/* title bar */
.titlebar { height: 51px; flex: none; background: #3b3a38; color: #fff; display: flex; align-items: center; }
.wi { fill: none; stroke: #fff; stroke-width: 1.6; }
.wi.thin { stroke-width: 1.3; }
.di { fill: none; stroke: #8a8886; stroke-width: 1.6; }
.qat { display: flex; align-items: center; gap: 22px; margin-left: 24px; width: 126px; }
.doc { font-size: 16.8px; white-space: nowrap; margin-top: 7px; }
.doc-caret { width: 0; height: 0; margin-left: 10px; border: 6.5px solid transparent; border-top: 7px solid #fff; border-bottom: 0; margin-top: 4px; }
.spacer { flex: 1; }
.signin { font-size: 17px; margin-right: 14px; }
.avatar { margin-right: 48px; }
.winbtns { display: flex; align-items: center; gap: 50px; margin-right: 23px; }

/* ribbon */
.ribbon { height: 189px; flex: none; background: #fbfbfb; display: flex; flex-direction: column; box-shadow: 0 2px 6px rgba(0,0,0,.18); position: relative; z-index: 2; }
.tabs { height: 54px; flex: none; display: flex; align-items: flex-start; padding: 12px 0 0 34px; gap: 47px; position: relative; }
.tab { font-size: 20px; line-height: 26px; height: 35px; }
.t-file { margin-right: 9px; }
.tab.active { font-weight: 600; border-bottom: 5px solid #117865; margin-right: -2px; }
.t-model { margin-right: 2px; }
.share { margin-left: auto; margin-right: 8px; margin-top: -6px; width: 125px; height: 36px; background: #117865; color: #fff; border-radius: 4px; display: flex; align-items: center; padding: 0 9px; gap: 12px; font-size: 16px; }
.chev-w { width: 9px; height: 9px; border-right: 1.5px solid #fff; border-bottom: 1.5px solid #fff; transform: rotate(45deg); margin: -4px 0 0 -3px; }
.groups { height: 132px; flex: none; display: flex; position: relative; }
.group { display: flex; flex-direction: column; border-right: 1px solid #d8d6d4; flex: none; }
.items { display: flex; height: 117px; flex: none; }
.glabel { text-align: center; font-size: 13.8px; line-height: 16px; color: #3b3a39; }
.g-clip { width: 240px; }
.g-data { width: 537px; } .g-data .items { padding-left: 12px; }
.g-query { width: 173px; } .g-query .items { padding-left: 15px; }
.g-insert { width: 220px; } .g-insert .items { padding-left: 12px; }
.g-calc { width: 278px; } .g-calc .items { padding-left: 14px; }
.g-sens { width: 110px; }
.g-share { width: 87px; }
.g-cop { width: 197px; } .g-cop .items { padding-left: 16px; }
.item { display: flex; flex-direction: column; align-items: center; flex: none; padding-top: 6px; }
.ic { flex: none; height: 48px; overflow: visible; }
.lbl { font-size: 16.4px; line-height: 24.5px; text-align: center; white-space: nowrap; margin-top: 3px; }
.w-paste { width: 84px; }
.w60 { width: 60px; } .w86 { width: 86px; } .w78 { width: 78px; } .w64 { width: 64px; } .w56 { width: 56px; }
.w88 { width: 88px; } .w80 { width: 80px; } .w68 { width: 68px; } .w72 { width: 72px; } .w100 { width: 100px; } .w84 { width: 84px; } .w110 { width: 110px; }
.dis { color: #bdbbb9; }
.chev { display: inline-block; width: 6px; height: 6px; border-right: 1.5px solid currentColor; border-bottom: 1.5px solid currentColor; transform: rotate(45deg); margin: 0 0 3px 5px; }
.minis { display: flex; flex-direction: column; gap: 12px; padding-top: 6px; }
.mini { display: flex; align-items: center; font-size: 16.5px; height: 24px; margin-left: -2px; }
.mini span { margin-left: 7px; }
.collapse { position: absolute; right: 9px; top: 81px; }
.xl { font: 700 15px "Liberation Sans", sans-serif; fill: #fff; stroke: none; text-anchor: middle; }
.tb { font: 400 28px "Open Sans", sans-serif; fill: #2b88d8; text-anchor: middle; }
.fx { font: italic 400 24px "Liberation Serif", serif; fill: #bdbbb9; stroke: none; text-anchor: end; }
.daxt { font: 700 10.5px "Open Sans", sans-serif; fill: #777; stroke: none; }

/* workspace */
.workspace { height: 732px; flex: none; display: flex; }
.leftnav { width: 61px; flex: none; background: #f3f2f1; border-right: 1px solid #e1dfdd; display: flex; flex-direction: column; }
.navitem { height: 60px; display: flex; justify-content: center; align-items: center; padding-left: 1px; }
.navitem:nth-child(2) { height: 56px; }
.navitem:nth-child(3) { height: 64px; }
.navitem.active { box-shadow: inset 4px 0 0 #117865; }
.center { width: 1537px; flex: none; display: flex; flex-direction: column; }
.canvas-row { height: 679px; flex: none; display: flex; }
.canvas { flex: 1; min-width: 0; background: #fff; }
.report {
  position: relative; margin-left: 148px; width: 1191px; height: 669px;
  background:
    repeating-linear-gradient(90deg, #666 0 3px, transparent 3px 6px) left bottom / 100% 3px no-repeat,
    repeating-linear-gradient(0deg, #666 0 3px, transparent 3px 6px) left top / 3px 100% no-repeat,
    repeating-linear-gradient(0deg, #666 0 3px, transparent 3px 6px) right top / 3px 100% no-repeat;
}
.rtitle { position: absolute; left: 231px; top: 6px; width: 688px; text-align: center; font: 700 29.6px/33px "Liberation Serif", serif; text-decoration: underline; }
.insight { position: absolute; left: 8px; top: 81px; font-size: 20.95px; line-height: 30px; white-space: nowrap; }
.vis { position: absolute; }
.vt { font: 700 19.75px/23px "Liberation Serif", serif; text-decoration: underline; white-space: nowrap; margin: -1px 0 1px; }
.chart { display: block; }
.v-pie { left: 6px; top: 148px; } .v-pie .vt { padding-left: 2px; margin-bottom: 0; }
.v-bars { left: 261px; top: 146px; } .v-bars .vt { padding-left: 7px; margin-bottom: 0; }
.v-lines { left: 523px; top: 146px; } .v-lines .vt { padding-left: 6px; margin-bottom: 0; }
.v-scatter { left: 3px; top: 407px; } .v-scatter .vt { padding-left: 5px; }
.v-heart { left: 261px; top: 407px; } .v-heart .vt { padding-left: 7px; }
.v-stack { left: 523px; top: 404px; } .v-stack .vt { padding-left: 6px; }
.grid { fill: none; stroke: #d6d5d3; stroke-width: 1; stroke-dasharray: 1 3; }
.leader { fill: none; stroke: #c8c6c4; stroke-width: 1; }
.tk { font: 400 11.5px Roboto, sans-serif; fill: #666; }
.lg { font: 700 11.5px "Open Sans", sans-serif; fill: #605e5c; }
.lg.big { font-size: 12px; }
.ll { font: 400 11.5px "Open Sans", sans-serif; fill: #605e5c; }
.lg.s, .ll.s { font-size: 10.5px; }
.ay { font: 400 12px "DejaVu Sans", sans-serif; fill: #333; }
.ay.small { font-size: 9.5px; }
.at { font: 400 13px "Open Sans", sans-serif; fill: #333; }
.at.s { font-size: 10px; }
.ln { fill: none; stroke-width: 3; stroke-linejoin: round; stroke-linecap: round; }
.ln.day { stroke: #118dff; }
.ln.night { stroke: #12239e; }

/* slicers */
.slicer { position: absolute; }
.shead { font-size: 16.4px; line-height: 22px; display: flex; align-items: center; }
.shead.big { font-size: 17.5px; }
.srow { display: flex; align-items: center; height: 26px; font-size: 13.8px; color: #3b3a39; white-space: nowrap; }
.srow.tight { height: 27px; }
.box { width: 15px; height: 15px; border: 1px solid #8a8886; background: #fff; margin-right: 7px; flex: none; }
.s-gender { left: 798px; top: 150px; } .s-gender .shead { margin-bottom: 1px; }
.s-shift { left: 797px; top: 264px; }
.s-occ { left: 797px; top: 372px; }
.lg-chev { margin-left: 22px; margin-top: -9px; }
.chev-g { display: inline-block; width: 10px; height: 10px; border-right: 1px solid #605e5c; border-bottom: 1px solid #605e5c; transform: rotate(45deg); margin-top: -5px; }
.age { position: absolute; left: 909px; top: 148px; width: 90px; }
.agehead { height: 19px; display: flex; align-items: center; justify-content: space-between; font-size: 9px; color: #3b3a39; padding-right: 2px; }
.agehead .chev-g { width: 6px; height: 6px; }
.agebox { width: 84px; height: 28px; border: 1px solid #edebe9; font-size: 12.5px; line-height: 26px; padding-left: 7px; background: #fff; }
.agebox.gap { margin-top: 9px; }
.ageslide { display: block; margin-top: 7px; }

/* cards */
.kpi { position: absolute; }
.k1 { left: 1021px; top: 256px; }
.k2 { left: 1022px; top: 365px; }
.k3 { left: 1024px; top: 475px; }
.k4 { left: 994px; top: 583px; }
.kcard { position: relative; display: flex; align-items: center; justify-content: center; font: 400 48px/1 Roboto, sans-serif; letter-spacing: -1.5px; color: #252423; padding-top: 2px; }
.kcard span { position: relative; }
.kcard::before { content: ""; position: absolute; inset: 0; background: #e1dfdd; }
.tri-up::before { clip-path: polygon(0 100%, 100% 100%, 100% 0); }
.tri-down::before { clip-path: polygon(0 0, 0 100%, 100% 100%); }
.plain::before { display: none; }
.k1 .kcard { width: 152px; height: 54px; margin: 3px 0 0 1px; }
.k2 .kcard { width: 153px; height: 56px; margin: 3px 0 0 1px; }
.k3 .kcard { width: 153px; height: 75px; margin-top: 4px; }
.k4 .kcard { width: 180px; height: 50px; margin: 4px 0 0 -3px; padding-top: 4px; }

/* filters */
.filters { width: 49px; flex: none; background: #fff; border-left: 1px solid #a19f9d; display: flex; flex-direction: column; align-items: center; padding: 20px 0 0 0; }
.dbl { fill: none; stroke: #252423; stroke-width: 1.6; flex: none; }
.funnel { margin-top: 25px; }
.vtext { writing-mode: vertical-rl; font-size: 21.5px; font-weight: 600; margin-top: 11px; line-height: 24px; }
.vtext.data { font-size: 25px; font-weight: 500; margin-top: 20px; margin-right: 7px; }

/* page strip */
.pagestrip { height: 53px; flex: none; display: flex; background: #f3f2f1; }
.devices { display: flex; width: 134px; }
.device { width: 64px; display: flex; justify-content: center; padding-top: 11px; position: relative; }
.device.phone { padding-top: 7px; width: 70px; }
.device.on::after { content: ""; position: absolute; left: 14px; width: 36px; top: 42px; height: 4px; background: #117865; border-radius: 2px; }
.pagenav { width: 58px; display: flex; gap: 27px; padding: 20px 0 0 7px; }
.tri-l, .tri-r { width: 0; height: 0; border: 6px solid transparent; border-left-width: 0; border-right: 7px solid #c8c6c4; }
.tri-r { border-left: 7px solid #c8c6c4; border-right: 0; }
.pagetab { width: 113px; background: #fff; border-left: 1px solid #a19f9d; border-bottom: 6px solid #117865; display: flex; align-items: center; justify-content: center; font-size: 16.5px; font-weight: 600; padding-top: 5px; }
.pageadd { width: 59px; background: #117865; display: flex; align-items: center; justify-content: center; padding-bottom: 4px; }

/* visualizations */
.vizpane { width: 271px; flex: none; background: #f3f2f1; border-left: 1px solid #e1dfdd; border-right: 1px solid #e1dfdd; display: flex; flex-direction: column; }
.vizhead { height: 58px; flex: none; display: flex; align-items: center; justify-content: space-between; padding: 0 11px 0 11px; }
.vizhead h2 { font-size: 22.5px; font-weight: 600; }
.vizsub { font-size: 16.6px; font-weight: 600; line-height: 20px; padding-left: 11px; }
.viztiles { display: flex; margin: 8px 0 0 11px; }
.tile { width: 48px; height: 48px; display: flex; align-items: center; justify-content: center; border-radius: 3px; }
.tile.sel { background: #d2d0ce; }
.tile.fmt { margin-left: 53px; }
.notch { display: block; margin-top: 6px; flex: none; }
.vizgrid { display: grid; grid-template-columns: repeat(6, 42px); grid-auto-rows: 42px; margin: 17px 0 0 15px; }
.vi { width: 28px; height: 28px; overflow: visible; }
.wh { fill: #fff; stroke: #555; stroke-width: 1.5; }
.bl { fill: #77b5ea; stroke: #1c6fb3; stroke-width: 1.5; }
.gr { fill: #b5b5b5; stroke: #888; stroke-width: 1.5; }
.ax { fill: none; stroke: #3b3a39; stroke-width: 1.5; }
.bt { fill: none; stroke: #1c6fb3; stroke-width: 1.5; }
.n123 { font: 400 14px "Open Sans", sans-serif; fill: #2b88d8; text-anchor: middle; }
.rt { font: 700 26px "Open Sans", sans-serif; fill: #2b78bf; text-anchor: middle; }
.py { font: 700 25px "Open Sans", sans-serif; fill: #2b78bf; text-anchor: middle; }
.more { height: 22px; padding-left: 14px; font-size: 22px; line-height: 20px; letter-spacing: 2px; flex: none; margin-top: -1px; }
.wells { position: relative; margin-top: 18px; border-top: 1px solid #e1dfdd; padding: 14px 0 0 17px; flex: 1; }
.wlabel { font-size: 16.5px; line-height: 22px; color: #3b3a39; }
.wlabel.strong { font-weight: 600; color: #484644; margin-top: 18px; }
.drop { margin: 9px 0 0 -11px; width: 254px; height: 41px; background: #fff; border: 1px dashed #d2d0ce; display: flex; align-items: center; padding-left: 15px; font-size: 17px; }
.trow { display: flex; align-items: center; height: 40px; font-size: 16.7px; color: #3b3a39; width: 220px; justify-content: space-between; }
.trow.first { margin-top: 6px; }
.toggle { width: 48px; height: 24px; border-radius: 12px; display: flex; align-items: center; justify-content: space-between; padding: 0 6px; font-size: 12.5px; }
.toggle b { font-weight: 400; }
.toggle i { width: 12px; height: 12px; border-radius: 50%; flex: none; }
.toggle.off { background: #fff; border: 1px solid #8a8886; color: #605e5c; }
.toggle.off i { background: #605e5c; }
.toggle.on { background: #117865; color: #fff; }
.toggle.on i { background: #fff; }
.scrollbar { position: absolute; right: 0; top: 3px; width: 9px; height: 171px; background: #8a8886; border-radius: 5px; }

/* data pane */
.datapane { flex: none; width: 50px; background: #f3f2f1; display: flex; flex-direction: column; align-items: center; padding: 20px 0 0 4px; }

/* status */
.status { flex: 1; display: flex; justify-content: space-between; align-items: center; background: #f3f2f1; border-top: 1px solid #e1dfdd; padding: 0 25px 0 6px; }
.pageno { font-size: 16.3px; color: #3b3a39; padding-top: 4px; }
.zoom { display: flex; align-items: center; }
.zm, .zp { font-weight: 600; font-size: 18px; color: #484644; line-height: 1; }
.slider { position: relative; width: 150px; height: 1.5px; background: #605e5c; margin: 0 9px 0 7px; }
.thumb { position: absolute; left: 40px; top: -8px; width: 6px; height: 18px; background: #605e5c; }
.tick { position: absolute; left: 75px; top: -3px; width: 1.5px; height: 8px; background: #605e5c; }
.pct { font-size: 16.5px; color: #605e5c; margin: 0 31px 0 21px; }
```
